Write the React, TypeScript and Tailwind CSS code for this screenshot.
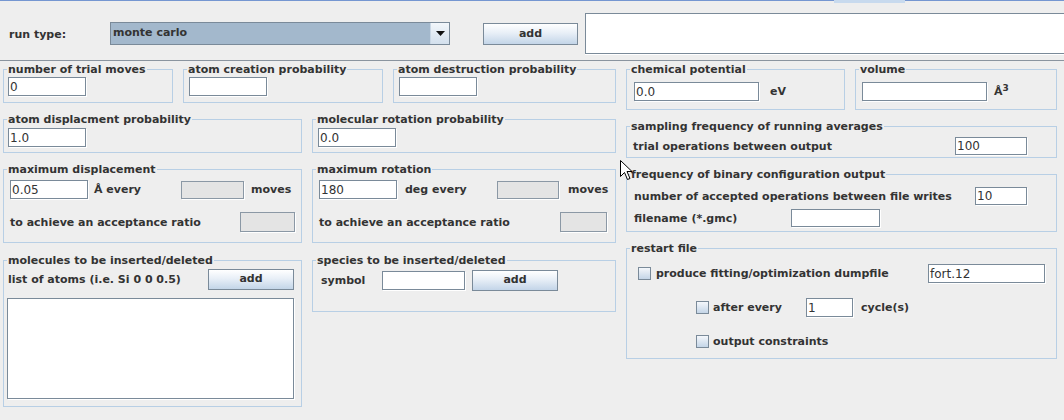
import React from "react";

type Kids = { children?: React.ReactNode; className?: string };

const Panel = ({ title, className = "", children }: Kids & { title: string }) => (
  <fieldset className={`border border-[#b8cfe5] ${className}`}>
    <legend className="ml-[3px] px-[1px] text-[11px] font-bold leading-[13px]">{title}</legend>
    {children}
  </fieldset>
);

const Field = ({
  value = "",
  className = "",
  disabled = false,
}: {
  value?: string;
  className?: string;
  disabled?: boolean;
}) => (
  <div
    className={`flex shrink-0 items-center border px-[1px] text-[12px] font-normal leading-none shadow-[1px_1px_0_#ffffff] ${
      disabled ? "border-[#8b98a5] bg-[#e4e4e4]" : "border-[#7a8a99] bg-white"
    } ${className}`}
  >
    {value}
  </div>
);

const AddButton = ({ className = "" }: { className?: string }) => (
  <div
    className={`flex shrink-0 items-center justify-center border border-[#7a8a99] bg-[linear-gradient(to_bottom,#ffffff,#e8eff7_45%,#c3d5e8)] text-[11px] font-bold ${className}`}
  >
    add
  </div>
);

const Check = () => (
  <div className="h-[13px] w-[13px] shrink-0 border border-[#7a8a99] bg-[linear-gradient(to_bottom,#f4f7fb,#c4d5e7)]" />
);

const Label = ({ children, className = "" }: Kids) => (
  <span className={`shrink-0 whitespace-nowrap text-[11px] font-bold leading-[13px] ${className}`}>{children}</span>
);

export default function App() {
  return (
    <div className="relative h-[420px] w-[1064px] overflow-hidden bg-[#eeeeee] font-['DejaVu_Sans',sans-serif] text-[#333333]">
      {/* tab strip edge */}
      <div className="flex h-[3px]">
        <div className="w-[834px] border-t border-[#7596d1]" />
        <div className="w-[71px] bg-[#c8daee]" />
        <div className="flex-1 border-t border-[#7596d1]" />
      </div>

      {/* run type bar */}
      <div className="flex h-[57px] items-start">
        <Label className="ml-[9px] mt-[25px] w-[101px]">run type:</Label>
        <div className="mt-[19px] flex h-[23px] w-[340px] shrink-0 border border-[#7a8a99]">
          <div className="flex flex-1 items-center bg-[#a3b8cc] pl-[2px] text-[11px] font-bold">monte carlo</div>
          <div className="flex w-[19px] items-center justify-center border-l border-[#c9d7e5] bg-[linear-gradient(to_bottom,#f2f6fa,#d3e0ed)]">
            <svg width="9" height="5" viewBox="0 0 9 5">
              <path d="M0 0H9L4.5 5Z" fill="#111" />
            </svg>
          </div>
        </div>
        <AddButton className="ml-[33px] mt-[20px] h-[22px] w-[95px]" />
        <div className="ml-[7px] mt-[10px] h-[41px] w-[500px] shrink-0 border-b border-l border-t border-[#7a8a99] bg-white shadow-[0_1px_0_#ffffff]" />
      </div>
      <div className="h-px bg-[#8a949f]" />

      <div className="mt-[2px] flex gap-[10px] pl-[3px]">
        {/* left block */}
        <div className="flex w-[613px] shrink-0 flex-col">
          <div className="flex gap-[10px]">
            <Panel title="number of trial moves" className="w-[170px]">
              <div className="h-[26px] pl-[4px] pt-[1px]">
                <Field value="0" className="h-[19px] w-[78px]" />
              </div>
            </Panel>
            <Panel title="atom creation probability" className="w-[200px]">
              <div className="h-[26px] pl-[5px] pt-[1px]">
                <Field className="h-[19px] w-[78px]" />
              </div>
            </Panel>
            <Panel title="atom destruction probability" className="w-[223px]">
              <div className="h-[26px] pl-[5px] pt-[1px]">
                <Field className="h-[19px] w-[78px]" />
              </div>
            </Panel>
          </div>

          <div className="mt-[10px] flex gap-[10px]">
            <Panel title="atom displacment probability" className="w-[299px]">
              <div className="h-[26px] pl-[4px] pt-[2px]">
                <Field value="1.0" className="h-[19px] w-[78px]" />
              </div>
            </Panel>
            <Panel title="molecular rotation probability" className="w-[304px]">
              <div className="h-[26px] pl-[5px] pt-[2px]">
                <Field value="0.0" className="h-[19px] w-[78px]" />
              </div>
            </Panel>
          </div>

          <div className="mt-[10px] flex gap-[10px]">
            <Panel title="maximum displacement" className="w-[299px]">
              <div className="h-[66px] pl-[6px] pt-[4px]">
                <div className="flex h-[19px] items-center">
                  <Field value="0.05" className="h-[19px] w-[78px]" />
                  <Label className="ml-[6px] w-[87px]">Å every</Label>
                  <Field disabled className="h-[18px] w-[63px]" />
                  <Label className="ml-[7px]">moves</Label>
                </div>
                <div className="mt-[13px] flex h-[20px] items-center">
                  <Label className="w-[230px]">to achieve an acceptance ratio</Label>
                  <Field disabled className="h-[20px] w-[55px]" />
                </div>
              </div>
            </Panel>
            <Panel title="maximum rotation" className="w-[304px]">
              <div className="h-[66px] pl-[6px] pt-[4px]">
                <div className="flex h-[19px] items-center">
                  <Field value="180" className="h-[19px] w-[78px]" />
                  <Label className="ml-[8px] w-[92px]">deg every</Label>
                  <Field disabled className="h-[18px] w-[62px]" />
                  <Label className="ml-[9px]">moves</Label>
                </div>
                <div className="mt-[13px] flex h-[20px] items-center">
                  <Label className="w-[241px]">to achieve an acceptance ratio</Label>
                  <Field disabled className="h-[20px] w-[47px]" />
                </div>
              </div>
            </Panel>
          </div>

          <div className="mt-[11px] flex items-start gap-[10px]">
            <Panel title="molecules to be inserted/deleted" className="w-[299px]">
              <div className="h-[139px] pl-[3px] pt-[2px]">
                <div className="flex h-[21px] items-center">
                  <Label className="ml-[1px] w-[200px]">list of atoms (i.e. Si 0 0 0.5)</Label>
                  <AddButton className="h-[21px] w-[86px]" />
                </div>
                <div className="mt-[8px] h-[101px] w-[287px] border border-[#7a8a99] bg-white shadow-[1px_1px_0_#ffffff]" />
              </div>
            </Panel>
            <Panel title="species to be inserted/deleted" className="w-[304px]">
              <div className="h-[44px] pl-[8px] pt-[3px]">
                <div className="flex h-[21px] items-center">
                  <Label className="w-[61px]">symbol</Label>
                  <Field className="h-[19px] w-[83px]" />
                  <AddButton className="ml-[7px] h-[21px] w-[86px]" />
                </div>
              </div>
            </Panel>
          </div>
        </div>

        {/* right block */}
        <div className="flex w-[431px] shrink-0 flex-col">
          <div className="flex gap-[10px]">
            <Panel title="chemical potential" className="w-[219px]">
              <div className="flex h-[33px] items-start pl-[7px] pt-[6px]">
                <div className="flex h-[19px] items-center">
                  <Field value="0.0" className="h-[19px] w-[125px]" />
                  <Label className="ml-[11px]">eV</Label>
                </div>
              </div>
            </Panel>
            <Panel title="volume" className="w-[202px]">
              <div className="flex h-[33px] items-start pl-[6px] pt-[6px]">
                <div className="flex h-[19px] items-center">
                  <Field className="h-[19px] w-[125px]" />
                  <Label className="ml-[7px]">
                    Å<sup className="text-[9px]">3</sup>
                  </Label>
                </div>
              </div>
            </Panel>
          </div>

          <Panel title="sampling frequency of running averages" className="mt-[10px] w-[431px]">
            <div className="flex h-[24px] items-start pl-[6px] pt-[4px]">
              <div className="flex h-[18px] items-center">
                <Label className="w-[322px]">trial operations between output</Label>
                <Field value="100" className="h-[18px] w-[72px]" />
              </div>
            </div>
          </Panel>

          <Panel title="frequency of binary configuration output" className="mt-[10px] w-[431px]">
            <div className="h-[50px] pl-[7px] pt-[6px]">
              <div className="flex h-[18px] items-center">
                <Label className="w-[341px]">number of accepted operations between file writes</Label>
                <Field value="10" className="h-[18px] w-[52px]" />
              </div>
              <div className="mt-[4px] flex h-[18px] items-center">
                <Label className="w-[157px]">filename (*.gmc)</Label>
                <Field className="h-[18px] w-[89px]" />
              </div>
            </div>
          </Panel>

          <Panel title="restart file" className="mt-[10px] w-[431px]">
            <div className="h-[103px] pt-[9px]">
              <div className="flex h-[19px] items-center pl-[11px]">
                <Check />
                <Label className="ml-[5px] w-[272px]">produce fitting/optimization dumpfile</Label>
                <Field value="fort.12" className="h-[19px] w-[117px]" />
              </div>
              <div className="mt-[15px] flex h-[19px] items-center pl-[69px]">
                <Check />
                <Label className="ml-[4px] w-[93px]">after every</Label>
                <Field value="1" className="h-[19px] w-[47px]" />
                <Label className="ml-[8px]">cycle(s)</Label>
              </div>
              <div className="mt-[15px] flex h-[19px] items-center pl-[69px]">
                <Check />
                <Label className="ml-[4px]">output constraints</Label>
              </div>
            </div>
          </Panel>
        </div>
      </div>

      {/* mouse pointer */}
      <svg className="absolute left-[620px] top-[160px]" width="13" height="21" viewBox="0 0 13 21">
        <path d="M0.5 0.5V16.5L4.5 12.5L7.5 19.5L10 18.5L7 11.5H12Z" fill="#ffffff" stroke="#000000" strokeWidth="1" />
      </svg>
    </div>
  );
}
